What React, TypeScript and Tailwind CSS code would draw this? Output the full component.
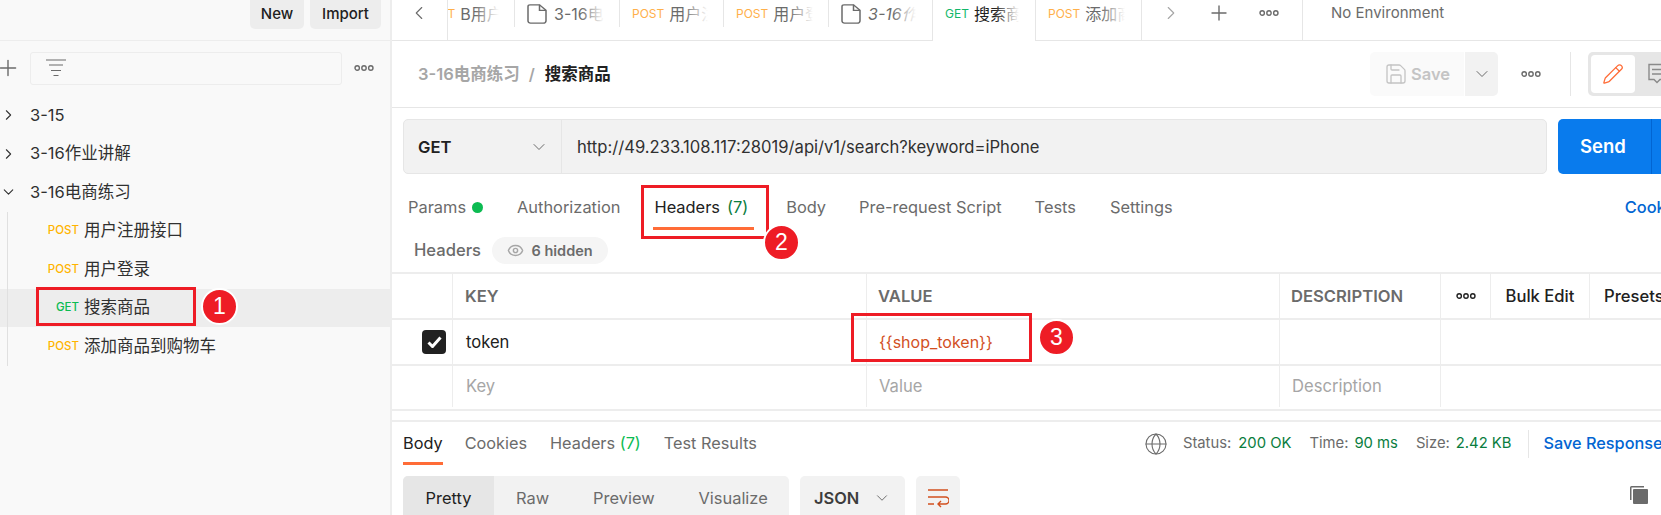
import { ChevronDown, ChevronLeft, ChevronRight, Eye, Globe, Pencil, Plus, Save } from "lucide-react";

const font = "font-['Inter','Noto_Sans_CJK_SC',sans-serif]";

function Dots({ className = "" }: { className?: string }) {
  return (
    <svg width="20" height="8" viewBox="0 0 20 8" fill="none" stroke="currentColor" strokeWidth="1.4" className={className}>
      <circle cx="3.2" cy="4" r="2.2" />
      <circle cx="10" cy="4" r="2.2" />
      <circle cx="16.8" cy="4" r="2.2" />
    </svg>
  );
}

function DocIcon() {
  return (
    <svg width="20" height="20" viewBox="0 0 20 24" fill="none" stroke="#6b6b6b" strokeWidth="1.5" className="shrink-0" preserveAspectRatio="none">
      <path d="M3 1h9.500L19 7.500V20a3 3 0 0 1-3 3H3.500A2.500 2.500 0 0 1 1 20.500V3a2 2 0 0 1 2-2z" />
      <path d="M12.500 1v6.500H19" />
    </svg>
  );
}

function Badge({ n }: { n: number }) {
  return (
    <span className="flex h-full w-full items-center justify-center rounded-full border-2 border-white bg-[#ee1c25] font-['Liberation_Sans',sans-serif] text-[23px] leading-none text-white">
      {n}
    </span>
  );
}

function Tab({ method, name, width, doc, italic, active, edge, clipped }: { method?: string; name: string; width: string; doc?: boolean; italic?: boolean; active?: boolean; edge?: boolean; clipped?: boolean }) {
  return (
    <div className={`relative h-full shrink-0 overflow-hidden whitespace-nowrap ${width} ${active ? "bg-white text-[#212121]" : "border-b border-[#e6e6e6] text-[#6b6b6b]"} ${edge ? "border-r border-r-[#e6e6e6]" : ""}`}>
      <div className={`flex h-[27px] items-center gap-[7px] ${clipped ? "pl-0" : "pl-[12px]"}`}>
        {doc && <DocIcon />}
        {method && <span className={`mr-[-2px] text-[12px] ${clipped ? "ml-[-25px]" : ""} ${method === "GET" ? "text-[#12b76a]" : "text-[#ffb04a]"}`}>{method}</span>}
        <span className={`text-[16px] ${italic ? "italic" : ""}`}>{name}</span>
      </div>
      <span className="absolute bottom-0 right-0 top-0 w-[40px] bg-linear-to-r from-transparent via-white via-60% to-white" />
      {!edge && <span className="absolute right-0 top-0 h-[27px] w-px bg-[#e6e6e6]" />}
    </div>
  );
}

function TreeRow({ method, name, active }: { method: string; name: string; active?: boolean }) {
  return (
    <div className={`flex h-[38.5px] items-center pl-[8px] ${active ? "bg-[#ededed]" : ""}`}>
      <div className={`flex w-[71px] justify-end text-[11.5px] font-medium ${method === "GET" ? "text-[#0cbb52]" : "text-[#ffb400]"}`}>{method}</div>
      <span className="ml-[5px] text-[16.5px] text-[#303030]">{name}</span>
    </div>
  );
}

function Folder({ name, open }: { name: string; open?: boolean }) {
  return (
    <div className="flex h-[38.5px] items-center text-[#303030]">
      {open ? <ChevronDown size={20} strokeWidth={1.5} className="w-[17px]" /> : <ChevronRight size={20} strokeWidth={1.5} className="w-[17px]" />}
      <span className="ml-[13px] text-[16.5px]">{name}</span>
    </div>
  );
}

function Sidebar() {
  return (
    <div className="flex h-full w-[392px] shrink-0 flex-col overflow-hidden border-r-2 border-[#ededed] bg-[#f9f9f9]">
      <div className="flex h-[41px] shrink-0 justify-end gap-[6px] border-b border-[#ededed] pr-[9px]">
        <div className="flex h-[29px] w-[54px] items-center justify-center rounded-b-[5px] bg-[#ededed] text-[15px] font-medium text-[#212121]">New</div>
        <div className="flex h-[29px] w-[71px] items-center justify-center rounded-b-[5px] bg-[#ededed] text-[15px] font-medium text-[#212121]">Import</div>
      </div>
      <div className="flex h-[55px] shrink-0 items-center pb-[1px]">
        <Plus size={26} strokeWidth={1.3} className="ml-[-5px] text-[#6b6b6b]" />
        <div className="ml-[9px] flex h-[33px] w-[312px] items-center rounded-[3px] border border-[#ededed] pl-[15px]">
          <svg width="20" height="18" viewBox="0 0 20 18" stroke="#6b6b6b" strokeWidth="1.2">
            <path d="M0 1h20M3 6h14M5 11.500h10M7.500 16.500h5" />
          </svg>
        </div>
        <Dots className="ml-[12px] text-[#6b6b6b]" />
      </div>
      <Folder name="3-15" />
      <Folder name="3-16作业讲解" />
      <Folder name="3-16电商练习" open />
      <div className="relative">
        <span className="absolute bottom-0 left-[7px] top-0 w-px bg-[#e0e0e0]" />
        <TreeRow method="POST" name="用户注册接口" />
        <TreeRow method="POST" name="用户登录" />
        <TreeRow method="GET" name="搜索商品" active />
        <TreeRow method="POST" name="添加商品到购物车" />
      </div>
    </div>
  );
}

function TabBar() {
  return (
    <div className="flex h-[41px] shrink-0 items-stretch">
      <div className="flex w-[56px] items-center justify-center border-b border-r border-[#e6e6e6] pb-[14px] text-[#6b6b6b]">
        <ChevronLeft size={22} strokeWidth={1.2} className="ml-[-1px]" />
      </div>
      <Tab clipped method="POST" name="B用户I" width="w-[67px]" />
      <Tab doc name="3-16电商" width="w-[105px]" />
      <Tab method="POST" name="用户注册" width="w-[104px]" />
      <Tab method="POST" name="用户登录" width="w-[105px]" />
      <Tab doc italic name="3-16作业" width="w-[104px]" edge />
      <Tab active method="GET" name="搜索商品" width="w-[103px]" edge />
      <Tab method="POST" name="添加商品" width="w-[106px]" edge />
      <div className="flex w-[161px] items-center border-b border-r border-[#e6e6e6] pb-[14px] text-[#6b6b6b]">
        <ChevronRight size={22} strokeWidth={1.2} className="ml-[18px] text-[#a6a6a6]" />
        <Plus size={24} strokeWidth={1.4} className="ml-[25px]" />
        <Dots className="ml-[28px]" />
      </div>
      <div className="flex flex-1 items-center border-b border-[#e6e6e6] pb-[14px] pl-[28px] text-[15px] text-[#6b6b6b]">No Environment</div>
    </div>
  );
}

function Breadcrumb() {
  return (
    <div className="flex h-[67px] shrink-0 items-center border-b border-[#e6e6e6]">
      <span className="ml-[26px] text-[16.5px] font-semibold text-[#a6a6a6]">3-16电商练习</span>
      <span className="ml-[9px] text-[16px] font-semibold text-[#a6a6a6]">/</span>
      <span className="ml-[10px] text-[16.5px] font-semibold text-[#212121]">搜索商品</span>
      <div className="ml-auto flex h-[44px] w-[94px] items-center rounded-l-[5px] bg-[#fafafa] pl-[14px] text-[#c4c4c4]">
        <Save size={24} strokeWidth={1.3} />
        <span className="ml-[3px] text-[16.5px] font-semibold">Save</span>
      </div>
      <div className="ml-px flex h-[44px] w-[33px] items-center justify-center rounded-r-[5px] bg-[#f2f2f2] text-[#6b6b6b]">
        <ChevronDown size={20} strokeWidth={1.2} />
      </div>
      <Dots className="ml-[23px] text-[#6b6b6b]" />
      <span className="ml-[29px] h-[44px] w-px bg-[#e6e6e6]" />
      <div className="ml-[17px] flex h-[44px] w-[114px] items-center rounded-[5px] bg-[#e6e6e6] pl-[3px]">
        <div className="flex h-[38px] w-[44px] items-center justify-center rounded-[4px] bg-white text-[#ff6c37]">
          <Pencil size={22} strokeWidth={1.4} />
        </div>
        <svg width="20" height="22" viewBox="0 0 20 22" fill="none" stroke="#8a8a8a" strokeWidth="1.4" className="ml-[12px]">
          <path d="M2 1.500h16v15h-5l-3 3-3-3H2zM5 6.500h10M5 11h10" />
        </svg>
      </div>
    </div>
  );
}

function UrlBar() {
  return (
    <div className="mt-[11px] flex h-[55px] shrink-0 items-stretch pl-[11px]">
      <div className="flex w-[1144px] items-stretch rounded-[5px] border border-[#e6e6e6] bg-[#f2f2f2]">
        <div className="flex w-[158px] items-center border-r border-[#e6e6e6] pl-[14px] pt-[1px]">
          <span className="text-[16.6px] font-semibold text-[#212121]">GET</span>
          <ChevronDown size={20} strokeWidth={1.2} className="ml-[78px] text-[#6b6b6b]" />
        </div>
        <span className="flex items-center pl-[15px] pt-[1px] text-[16.6px] text-[#303030]">http://49.233.108.117:28019/api/v1/search?keyword=iPhone</span>
      </div>
      <div className="ml-[11px] flex w-[110px] items-center rounded-[5px] bg-[#097bed]">
        <span className="flex h-full w-[90px] items-center justify-center pt-[1px] text-[18.5px] font-semibold text-white">Send</span>
        <span className="ml-[3px] h-full w-px bg-[#0265d2]" />
      </div>
    </div>
  );
}

function RequestTabs() {
  return (
    <div className="mt-[8px] flex h-[50px] shrink-0 items-center pl-[16px] text-[16.4px] text-[#6b6b6b]">
      <span>Params</span>
      <span className="ml-[6px] h-[11px] w-[11px] rounded-full bg-[#0cbb52]" />
      <span className="ml-[34px]">Authorization</span>
      <span className="relative ml-[34px] flex h-full items-center text-[#212121]">
        Headers<span className="ml-[7px] text-[#0a7d3e]">(7)</span>
        <span className="absolute bottom-[2px] left-[-1px] right-[-6px] h-[3px] bg-[#ff6c37]" />
      </span>
      <span className="ml-[38px]">Body</span>
      <span className="ml-[33px]">Pre-request Script</span>
      <span className="ml-[33px]">Tests</span>
      <span className="ml-[34px]">Settings</span>
      <span className="ml-[452px] font-medium text-[#0265d2]">Cookies</span>
    </div>
  );
}

function HeadersTable() {
  const cols = "grid grid-cols-[61px_414px_413px_161px_50px_99px_72px]";
  const line = "border-r border-[#ededed] flex items-center";
  return (
    <div className="border-t-2 border-[#ededed]">
      <div className={`${cols} h-[46px] border-b-2 border-[#ededed] text-[16.6px]`}>
        <div className={line} />
        <div className={`${line} pl-[12px] font-semibold text-[#6b6b6b]`}>KEY</div>
        <div className={`${line} pl-[11px] font-semibold text-[#6b6b6b]`}>VALUE</div>
        <div className={`${line} pl-[11px] font-semibold text-[#6b6b6b]`}>DESCRIPTION</div>
        <div className={`${line} justify-center text-[#212121]`}>
          <Dots />
        </div>
        <div className={`${line} justify-center font-medium text-[#212121]`}>Bulk Edit</div>
        <div className="flex items-center pl-[14px] font-medium text-[#212121]">Presets</div>
      </div>
      <div className={`${cols} h-[46px] border-b-2 border-[#ededed] text-[16.6px]`}>
        <div className={`${line} justify-end pr-[6px]`}>
          <span className="flex h-[24px] w-[24px] items-center justify-center rounded-[4px] bg-[#212121]">
            <svg width="15" height="12" viewBox="0 0 15 12" fill="none" stroke="white" strokeWidth="3">
              <path d="M1.500 6.500l4 4 8-9" />
            </svg>
          </span>
        </div>
        <div className={`${line} pl-[13px] text-[#212121]`}>token</div>
        <div className={`${line} pl-[12px] text-[16px] text-[#d2501f]`}>{"{{shop_token}}"}</div>
        <div className={line} />
        <div />
      </div>
      <div className={`${cols} h-[45px] border-b-2 border-[#ededed] pb-[2px] text-[16.6px] text-[#a6a6a6]`}>
        <div className={line} />
        <div className={`${line} pl-[13px]`}>Key</div>
        <div className={`${line} pl-[12px]`}>Value</div>
        <div className={`${line} pl-[12px]`}>Description</div>
      </div>
    </div>
  );
}

function ResponsePane() {
  return (
    <div className="mt-[9px] flex flex-1 flex-col border-t-2 border-[#ededed]">
      <div className="flex h-[43px] shrink-0 items-center pl-[11px] text-[16.3px] text-[#6b6b6b]">
        <span className="relative flex h-full items-center text-[#212121]">
          Body
          <span className="absolute bottom-0 left-0 right-0 h-[3px] bg-[#ff6c37]" />
        </span>
        <span className="ml-[22px]">Cookies</span>
        <span className="ml-[23px]">
          Headers <span className="text-[#0cbb52]">(7)</span>
        </span>
        <span className="ml-[23px]">Test Results</span>
        <Globe size={24} strokeWidth={1.1} className="ml-[387px] text-[#6b6b6b]" />
        <div className="ml-[15px] flex items-center text-[14.8px]">
          <span>Status:</span>
          <span className="ml-[7px] text-[#0a7d3e]">200 OK</span>
          <span className="ml-[18px]">Time:</span>
          <span className="ml-[6px] text-[#0a7d3e]">90 ms</span>
          <span className="ml-[18px]">Size:</span>
          <span className="ml-[6px] text-[#0a7d3e]">2.42 KB</span>
        </div>
        <span className="ml-[17px] h-[28px] w-px bg-[#e6e6e6]" />
        <span className="ml-[14px] whitespace-nowrap font-medium text-[#0265d2]">Save Response</span>
      </div>
      <div className="mt-[11px] flex items-start pl-[11px] text-[16.4px] text-[#6b6b6b]">
        <div className="flex h-[44px] w-[386px] items-center rounded-[5px] bg-[#f2f2f2]">
          <span className="flex h-full w-[91px] items-center justify-center rounded-l-[5px] bg-[#e6e6e6] text-[#212121]">Pretty</span>
          <span className="ml-[22px]">Raw</span>
          <span className="ml-[44px]">Preview</span>
          <span className="ml-[44px]">Visualize</span>
        </div>
        <div className="ml-[11px] flex h-[44px] w-[105px] items-center rounded-[5px] bg-[#f2f2f2] pl-[14px]">
          <span className="font-semibold text-[#3d3d3d]">JSON</span>
          <ChevronDown size={18} strokeWidth={1.3} className="ml-[14px]" />
        </div>
        <div className="ml-[11px] flex h-[44px] w-[44px] items-center justify-center rounded-[5px] bg-[#f2f2f2]">
          <svg width="22" height="20" viewBox="0 0 22 20" fill="none" stroke="#d2501f" strokeWidth="1.4">
            <path d="M1 2h20M1 9h17.500a2.500 2.500 0 0 1 0 7H11M14 13l-3 3 3 3M1 16h6" />
          </svg>
        </div>
        <svg width="20" height="20" viewBox="0 0 20 20" className="ml-[669px] mt-[9px]">
          <path d="M1 15V2.500A1.500 1.500 0 0 1 2.500 1H15v1.500H2.500V15z" fill="#6b6b6b" />
          <rect x="4" y="4" width="15" height="15" rx="1" fill="#6b6b6b" />
        </svg>
      </div>
    </div>
  );
}

export default function App() {
  return (
    <div className={`relative flex h-[515px] w-[1661px] overflow-hidden bg-white ${font}`}>
      <Sidebar />
      <div className="flex h-full w-[1269px] shrink-0 flex-col overflow-hidden">
        <TabBar />
        <div className="flex w-[1310px] flex-1 flex-col">
          <Breadcrumb />
          <UrlBar />
          <RequestTabs />
          <div className="flex h-[40px] shrink-0 items-center pb-[3px] pl-[22px]">
            <span className="text-[16.6px] font-medium text-[#6b6b6b]">Headers</span>
            <div className="ml-[11px] flex h-[27px] w-[116px] items-center justify-center rounded-full bg-[#f5f5f5] text-[14.5px] font-semibold text-[#6b6b6b]">
              <Eye size={17} className="mr-[7px] text-[#a6a6a6]" />6 hidden
            </div>
          </div>
          <HeadersTable />
          <ResponsePane />
        </div>
      </div>

      {/* annotations */}
      <div className="absolute left-[36px] top-[287px] h-[39px] w-[160px] border-[3px] border-[#ee1c25]" />
      <div className="absolute left-[201px] top-[288px] h-[37px] w-[37px]"><Badge n={1} /></div>
      <div className="absolute left-[641px] top-[185px] h-[54px] w-[128px] border-[3px] border-[#ee1c25]" />
      <div className="absolute left-[763px] top-[224px] h-[37px] w-[37px]"><Badge n={2} /></div>
      <div className="absolute left-[851px] top-[313px] h-[49px] w-[181px] border-[3px] border-[#ee1c25]" />
      <div className="absolute left-[1038px] top-[319px] h-[37px] w-[37px]"><Badge n={3} /></div>
    </div>
  );
}
